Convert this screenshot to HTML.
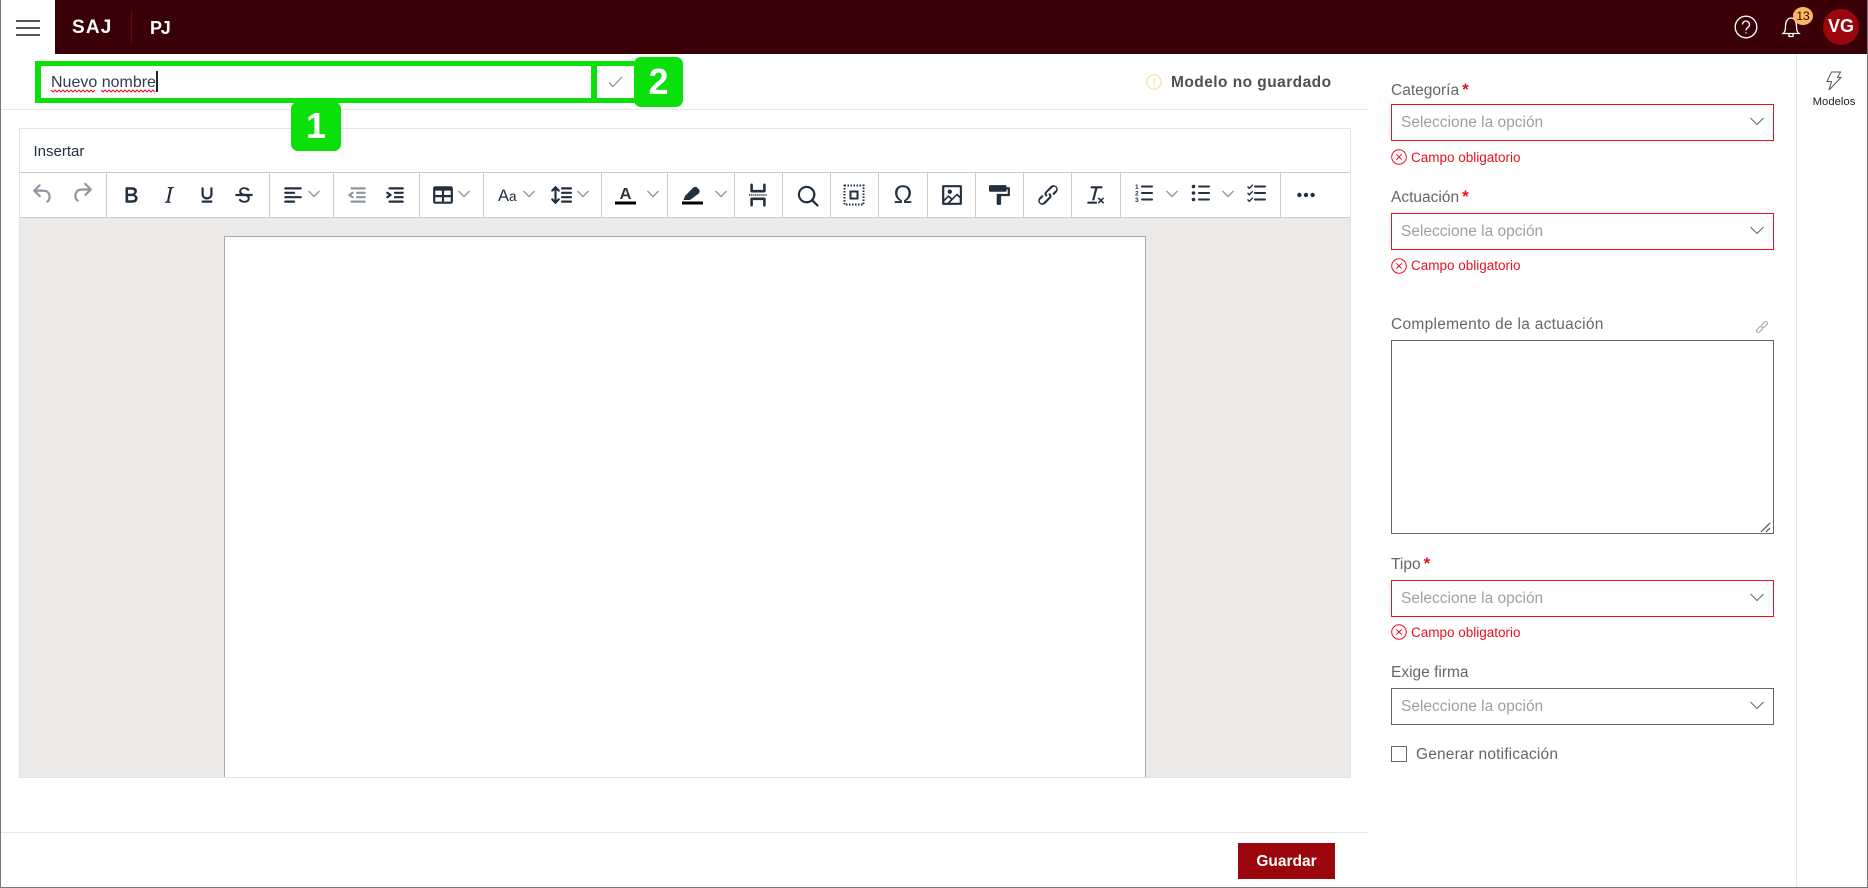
<!DOCTYPE html>
<html lang="es"><head><meta charset="utf-8"><title>SAJ PJ</title>
<style>
*{box-sizing:border-box}
html,body{margin:0;padding:0;background:#fff;width:1868px;height:888px;overflow:hidden;font-family:"Liberation Sans",sans-serif}
.a{position:absolute}
.t{position:absolute;white-space:nowrap;line-height:20px}
.sep{position:absolute;top:173px;width:1px;height:44px;background:#ccc}
.ic{position:absolute;top:182.5px;width:24px;height:24px;fill:#222f3e;transform:scale(1.1)}
.ic.ns{transform:none;top:182px}
.ch{position:absolute;top:188px;width:14px;height:12px;fill:none;stroke:#222f3e;stroke-opacity:.5;stroke-width:1.4}
.lab{position:absolute;left:1391px;font-size:15.5px;color:#666;white-space:nowrap;line-height:20px}
.lab b{color:#e81123;font-weight:bold;margin-left:3px;font-size:17px}
.sel{position:absolute;left:1391px;width:383px;height:37px;border:1px solid #e81123;background:#fff}
.sel.g{border-color:#666}
.sel span{position:absolute;left:9px;top:8px;font-size:15.5px;line-height:20px;color:#a19f9d;white-space:nowrap}
.sel svg{position:absolute;right:9px;top:12px;width:14px;height:9px;fill:none;stroke:#666;stroke-width:1}
.err{position:absolute;left:1391px;height:18px;width:200px}
.err svg{position:absolute;left:0;top:0;width:16px;height:16px;fill:none;stroke:#e81123;stroke-width:1}
.err span{position:absolute;left:20px;top:0;font-size:13.5px;line-height:18px;color:#e81123;white-space:nowrap}
.badge{position:absolute;z-index:5;background:#0be00b;border-radius:7px;color:#fff;font-weight:bold;font-size:36px;text-align:center}
</style></head><body>
<!-- header -->
<div class="a" style="left:55px;top:0;width:1813px;height:54px;background:#3a0007"></div>
<div class="a" style="left:16px;top:20px;width:24px;height:2px;background:#555"></div>
<div class="a" style="left:16px;top:27px;width:24px;height:2px;background:#555"></div>
<div class="a" style="left:16px;top:33.500px;width:24px;height:2px;background:#555"></div>
<div class="t" style="left:72px;top:18px;font-size:19px;font-weight:bold;color:#fff;letter-spacing:1.200px">SAJ</div>
<div class="a" style="left:131px;top:10px;width:1px;height:34px;background:#6a0a10"></div>
<div class="t" style="left:150px;top:18px;font-size:18px;font-weight:bold;color:#fff;letter-spacing:-1.200px">PJ</div>
<svg class="a" style="left:1734px;top:15px;width:24px;height:24px" viewBox="0 0 24 24" fill="none" stroke="#fff" stroke-width="1.300"><circle cx="12" cy="12" r="10.800"/><path d="M8.500 9.500a3.500 3.500 0 1 1 5.500 2.900c-1.200.8-2 1.400-2 3"/><circle cx="12" cy="18" r=".7" fill="#fff" stroke="none"/></svg>
<svg class="a" style="left:1780px;top:15px;width:22px;height:24px" viewBox="0 0 22 24" fill="none" stroke="#fff" stroke-width="1.300"><path d="M3 18.500c2-1.600 2.500-3.500 2.500-7.500C5.500 7 7.500 3 11 3s5.500 4 5.500 8c0 4 .5 5.900 2.500 7.500z"/><path d="M9 19v2.500h4V19"/></svg>
<div class="a" style="left:1793px;top:7px;width:20px;height:18px;border-radius:50%;background:#f9b85f;color:#3a0007;font-size:12px;line-height:18px;text-align:center">13</div>
<div class="a" style="left:1823px;top:9px;width:36px;height:36px;border-radius:50%;background:#9a060c;color:#fff;font-weight:bold;font-size:18px;line-height:35px;text-align:center">VG</div>

<!-- title row -->
<div class="a" style="left:0;top:109px;width:1369px;height:1px;background:#e6e6e6"></div>
<div class="a" style="left:35px;top:61px;width:562px;height:42px;border:6px solid #0be00b;border-top-width:5px;border-bottom-width:5px;background:#fff"></div>
<div class="a" style="left:597px;top:61px;width:38px;height:5px;background:#0be00b"></div>
<div class="a" style="left:597px;top:98px;width:38px;height:5px;background:#0be00b"></div>
<svg class="a" style="left:608px;top:76px;width:15px;height:12px" viewBox="0 0 15 12" fill="none" stroke="#666" stroke-width=".9"><path d="M1 6.500l4 4L14 1"/></svg>
<div class="t" style="left:51px;top:73px;font-size:16px;color:#323a50">Nuevo nombre</div>
<svg class="a" style="left:51px;top:88.500px;width:106px;height:4px" viewBox="0 0 106 4" fill="none" stroke="#e81123" stroke-width="1"><path d="M0 1l2 2 2-2 2 2 2-2 2 2 2-2 2 2 2-2 2 2 2-2 2 2 2-2 2 2 2-2 2 2 2-2 2 2 2-2 2 2 2-2 2 2 2-2M50 1l2 2 2-2 2 2 2-2 2 2 2-2 2 2 2-2 2 2 2-2 2 2 2-2 2 2 2-2 2 2 2-2 2 2 2-2 2 2 2-2 2 2 2-2 2 2 2-2 2 2 2-2 2 2"/></svg>
<div class="a" style="left:156px;top:71px;width:2px;height:21px;background:#222"></div>
<div class="badge" style="left:634px;top:57px;width:49px;height:50px;line-height:49px">2</div>
<div class="badge" style="left:291px;top:102px;width:50px;height:49px;line-height:47px">1</div>
<svg class="a" style="left:1146px;top:74px;width:16px;height:16px" viewBox="0 0 16 16" fill="none" stroke="#f7dfa5" stroke-width="1.200"><circle cx="8" cy="8" r="7.200"/><path d="M8 4v5.500M8 11v1.200"/></svg>
<div class="t" style="left:1171px;top:73px;font-size:15.500px;font-weight:bold;color:#4f4f55;letter-spacing:.45px">Modelo no guardado</div>

<!-- editor -->
<div class="a" style="left:19px;top:128px;width:1332px;height:650px;border:1px solid #e3e3e8;background:#ebeae8"></div>
<div class="a" style="left:20px;top:129px;width:1330px;height:88px;background:#fff"></div>
<div class="a" style="left:20px;top:172px;width:1330px;height:1px;background:#ccc"></div>
<div class="a" style="left:20px;top:217px;width:1330px;height:1px;background:#ccc"></div>
<div class="t" style="left:33.500px;top:142px;font-size:15px;color:#222f3e">Insertar</div>
<div class="a" style="left:224px;top:236px;width:922px;height:541px;background:#fff;border:1px solid #aaa;border-bottom:0"></div>

<div class="sep" style="left:106px"></div><div class="sep" style="left:269px"></div><div class="sep" style="left:333px"></div><div class="sep" style="left:419px"></div><div class="sep" style="left:483px"></div><div class="sep" style="left:601px"></div><div class="sep" style="left:667px"></div><div class="sep" style="left:734px"></div><div class="sep" style="left:782px"></div><div class="sep" style="left:830px"></div><div class="sep" style="left:878px"></div><div class="sep" style="left:927px"></div><div class="sep" style="left:975px"></div><div class="sep" style="left:1023px"></div><div class="sep" style="left:1071px"></div><div class="sep" style="left:1120px"></div><div class="sep" style="left:1280px"></div>

<svg class="ic" style="left:31px;opacity:.5" viewBox="0 0 24 24"><path d="M6.400 8H12c3.700 0 6.200 2 6.800 5.100.6 2.700-.4 5.600-2.300 6.800a1 1 0 0 1-1-1.800c1.100-.6 1.800-2.700 1.400-4.600-.5-2.100-2.100-3.500-4.900-3.500H6.400l3.300 3.300a1 1 0 1 1-1.400 1.400l-5-5a1 1 0 0 1 0-1.400l5-5a1 1 0 0 1 1.400 1.400L6.400 8Z" transform="translate(0 -1)"/></svg>
<svg class="ic" style="left:70px;opacity:.5" viewBox="0 0 24 24"><path d="M17.600 10H12c-2.800 0-4.400 1.400-4.900 3.500-.4 2 .3 4 1.400 4.600a1 1 0 1 1-1 1.800c-2-1.200-2.900-4.100-2.300-6.800.6-3 3-5.100 6.800-5.100h5.600l-3.300-3.300a1 1 0 1 1 1.400-1.400l5 5a1 1 0 0 1 0 1.400l-5 5a1 1 0 0 1-1.400-1.400l3.300-3.300Z" transform="translate(0 -2)"/></svg>
<svg class="ic" style="left:118.500px" viewBox="0 0 24 24"><path d="M7.800 19c-.3 0-.5 0-.6-.2l-.2-.5V5.700c0-.2 0-.4.2-.5l.6-.2h5c1.500 0 2.700.3 3.500 1 .7.600 1.100 1.400 1.100 2.500a3 3 0 0 1-.6 1.900c-.4.600-1 1-1.600 1.200.4.1.9.300 1.300.6s.8.700 1 1.200c.4.400.5 1 .5 1.600 0 1.300-.4 2.300-1.300 3-.8.700-2.100 1-3.800 1H7.800Zm5-8.300c.6 0 1.200-.1 1.600-.5.4-.3.6-.7.6-1.300 0-1.100-.8-1.700-2.300-1.700H9.300v3.500h3.400Zm.5 6c.7 0 1.300-.1 1.700-.4.4-.4.6-.9.6-1.500s-.2-1-.7-1.400c-.4-.3-1-.4-2-.4H9.400v3.800h4Z"/></svg>
<svg class="ic" style="left:157px" viewBox="0 0 24 24"><path d="m16.700 4.700-.1.900h-.3c-.6 0-1 0-1.400.3-.3.3-.4.6-.5 1.100l-2.100 9.800v.6c0 .5.400.8 1.400.8h.2l-.2.8H8l.2-.8h.2c1.100 0 1.800-.5 2-1.500l2-9.800.1-.5c0-.6-.4-.8-1.400-.8h-.3l.2-.9h5.800Z"/></svg>
<svg class="ic" style="left:194.500px" viewBox="0 0 24 24"><path d="M16 5c.6 0 1 .4 1 1v5.500a4 4 0 0 1-.4 1.800l-1 1.400a5.300 5.300 0 0 1-5.500 1 5 5 0 0 1-1.600-1c-.5-.4-.8-.9-1.100-1.400a4 4 0 0 1-.4-1.800V6c0-.6.4-1 1-1s1 .4 1 1v5.500c0 .3 0 .6.200 1l.6.700a3.300 3.300 0 0 0 2.200.8 3.400 3.400 0 0 0 2.200-.8c.3-.2.4-.5.6-.8l.2-.9V6c0-.6.4-1 1-1ZM8 17h8c.6 0 1 .4 1 1s-.4 1-1 1H8a1 1 0 0 1 0-2Z"/></svg>
<svg class="ic" style="left:232px" viewBox="0 0 24 24"><path d="M15.600 8.500c-.5-.7-1-1.100-1.300-1.300-.6-.4-1.300-.6-2-.6-2.700 0-2.800 1.700-2.800 2.100 0 1.600 1.800 2 3.200 2.300 4.400.9 4.600 2.800 4.600 3.900 0 1.400-.7 4.100-5 4.100A6.200 6.200 0 0 1 7 16.400l1.500-1.100c.4.600 1.600 2 3.700 2 1.600 0 2.500-.4 3-1.200.4-.8.3-2-.8-2.600-.7-.4-1.600-.7-2.900-1-1-.2-3.900-.8-3.900-3.600C7.600 6 10.300 5 12.400 5c2.900 0 4.200 1.600 4.700 2.400l-1.500 1.100Z"/><path d="M5 11h14a1 1 0 0 1 0 2H5a1 1 0 0 1 0-2Z"/></svg>
<svg class="ic" style="left:281px" viewBox="0 0 24 24"><path d="M5 5h14c.6 0 1 .4 1 1s-.4 1-1 1H5a1 1 0 1 1 0-2Zm0 4h8c.6 0 1 .4 1 1s-.4 1-1 1H5a1 1 0 1 1 0-2Zm0 8h8c.6 0 1 .4 1 1s-.4 1-1 1H5a1 1 0 0 1 0-2Zm0-4h14c.6 0 1 .4 1 1s-.4 1-1 1H5a1 1 0 0 1 0-2Z"/></svg>
<svg class="ch" style="left:307px" viewBox="0 0 14 12"><path d="M1.500 3l5.500 5.500L12.500 3"/></svg>
<svg class="ic" style="left:345px;opacity:.5" viewBox="0 0 24 24"><path d="M7 5h12c.6 0 1 .4 1 1s-.4 1-1 1H7a1 1 0 1 1 0-2Zm5 4h7c.6 0 1 .4 1 1s-.4 1-1 1h-7a1 1 0 0 1 0-2Zm0 4h7c.6 0 1 .4 1 1s-.4 1-1 1h-7a1 1 0 0 1 0-2Zm-5 4h12a1 1 0 0 1 0 2H7a1 1 0 0 1 0-2Zm1.600-3.800a1 1 0 0 1-1.200 1.600l-3-2a1 1 0 0 1 0-1.600l3-2a1 1 0 0 1 1.200 1.600L6.800 12l1.800 1.200Z"/></svg>
<svg class="ic" style="left:383px" viewBox="0 0 24 24"><path d="M7 5h12c.6 0 1 .4 1 1s-.4 1-1 1H7a1 1 0 1 1 0-2Zm5 4h7c.6 0 1 .4 1 1s-.4 1-1 1h-7a1 1 0 0 1 0-2Zm0 4h7c.6 0 1 .4 1 1s-.4 1-1 1h-7a1 1 0 0 1 0-2Zm-5 4h12a1 1 0 0 1 0 2H7a1 1 0 0 1 0-2Zm-2.600-3.800L6.200 12l-1.800-1.200a1 1 0 0 1 1.200-1.600l3 2a1 1 0 0 1 0 1.600l-3 2a1 1 0 1 1-1.200-1.600Z"/></svg>
<svg class="ic" style="left:431px" viewBox="0 0 24 24"><path d="M19 4a2 2 0 0 1 2 2v12a2 2 0 0 1-2 2H5a2 2 0 0 1-2-2V6c0-1.100.9-2 2-2h14ZM5 14v4h6v-4H5Zm14 0h-6v4h6v-4Zm0-6h-6v4h6V8ZM5 12h6V8H5v4Z"/></svg>
<svg class="ch" style="left:457px" viewBox="0 0 14 12"><path d="M1.500 3l5.500 5.500L12.500 3"/></svg>
<div class="t" style="left:498px;top:186px;color:#222f3e;font-size:16.500px">A<span style="font-size:13.500px">a</span></div>
<svg class="ch" style="left:522px" viewBox="0 0 14 12"><path d="M1.500 3l5.500 5.500L12.500 3"/></svg>
<svg class="ic" style="left:549px" viewBox="0 0 24 24"><path d="M21 5a1 1 0 0 1 .1 2H13a1 1 0 0 1-.1-2H21zm0 4a1 1 0 0 1 .1 2H13a1 1 0 0 1-.1-2H21zm0 4a1 1 0 0 1 .1 2H13a1 1 0 0 1-.1-2H21zm0 4a1 1 0 0 1 .1 2H13a1 1 0 0 1-.1-2H21zM7 3.600l3.700 3.700a1 1 0 0 1-1.300 1.500h-.1L8 7.300v9.200l1.300-1.300a1 1 0 0 1 1.300 0h.1c.4.400.4 1 0 1.300v.1L7 20.400l-3.700-3.700a1 1 0 0 1 1.300-1.500h.1L6 16.700V7.400L4.700 8.700a1 1 0 0 1-1.300 0h-.1a1 1 0 0 1 0-1.300v-.1L7 3.600z"/></svg>
<svg class="ch" style="left:576px" viewBox="0 0 14 12"><path d="M1.500 3l5.500 5.500L12.500 3"/></svg>
<svg class="ic ns" style="left:614px" viewBox="0 0 24 24"><path d="M1 19.500h21v3H1z" fill="#000"/><path d="M6 17l4-11h3l4 11h-2.200l-.9-2.700H9.100L8.200 17H6Zm3.700-4.500h3.700l-1.850-5z" fill-rule="evenodd"/></svg>
<svg class="ch" style="left:646px" viewBox="0 0 14 12"><path d="M1.500 3l5.500 5.500L12.500 3"/></svg>
<svg class="ic ns" style="left:680px" viewBox="0 0 24 24"><path d="M2 19.500h21v3H2z" fill="#000"/><path d="M3.500 18l1.500-4 8-8.200c1.300-1.200 3-1.200 4.300 0l1.500 1.500c1.200 1.200 1.200 2.900 0 4.200L10 18H3.500z"/></svg>
<svg class="ch" style="left:714px" viewBox="0 0 14 12"><path d="M1.500 3l5.500 5.500L12.500 3"/></svg>
<svg class="ic" style="left:746px;transform:scale(1.280)" viewBox="0 0 24 24"><path d="M7 3c.6 0 1 .4 1 1v4h8V4a1 1 0 0 1 2 0v5c0 .6-.4 1-1 1H7a1 1 0 0 1-1-1V4c0-.6.4-1 1-1Zm0 18a1 1 0 0 1-1-1v-5c0-.6.4-1 1-1h10c.6 0 1 .4 1 1v5a1 1 0 0 1-2 0v-4H8v4c0 .6-.4 1-1 1Z"/><path d="M5 12h14" fill="none" stroke="#222f3e" stroke-width="1.100" stroke-dasharray="1 .6"/></svg>
<svg class="ic" style="left:795px" viewBox="0 0 24 24"><path d="M16 17.300a8 8 0 1 1 1.400-1.400l4.300 4.400a1 1 0 0 1-1.400 1.400l-4.400-4.300Zm-5-.3a6 6 0 1 0 0-12 6 6 0 0 0 0 12Z" transform="translate(.6 .6)"/></svg>
<svg class="ic ns" style="left:842px;top:182.500px" viewBox="0 0 24 24"><path d="M7.500 7.500h9v9h-9zm2 2v5h5v-5z" fill-rule="evenodd"/><path d="M2.500 2.500h19v19h-19z" fill="none" stroke="#222f3e" stroke-width="2" stroke-dasharray="1.500 1.500"/></svg>
<div class="t" style="left:891px;top:185px;width:24px;text-align:center;font-size:25px;color:#222f3e">Ω</div>
<svg class="ic" style="left:940px" viewBox="0 0 24 24"><path d="m5 15.700 3.300-3.200c.3-.3.700-.3 1 0L12 15l4.100-4c.3-.4.800-.4 1 0l2 1.900V5H5v10.700ZM5 18V19h3l2.800-2.900-2-2L5 17.900Zm14-3-2.500-2.400-6.400 6.500H19v-4ZM4 3h16c.6 0 1 .4 1 1v16c0 .6-.4 1-1 1H4a1 1 0 0 1-1-1V4c0-.6.4-1 1-1Zm6 8a2 2 0 1 0 0-4 2 2 0 0 0 0 4Z" fill-rule="evenodd"/></svg>
<svg class="ic" style="left:988px" viewBox="0 0 24 24"><path d="M18 5V4c0-.5-.4-1-1-1H3a1 1 0 0 0-1 1v4c0 .6.500 1 1 1h14c.6 0 1-.4 1-1V7h1v4H9v9c0 .6.400 1 1 1h2c.6 0 1-.4 1-1v-7h8V5h-3Z"/></svg>
<svg class="ic" style="left:1036px" viewBox="0 0 24 24"><path d="M6.200 12.300a1 1 0 0 1 1.400 1.400l-2 2a2 2 0 1 0 2.600 2.800l4.800-4.800a1 1 0 0 0 0-1.400 1 1 0 1 1 1.400-1.300 2.900 2.900 0 0 1 0 4L9.600 20a3.900 3.900 0 0 1-5.500-5.500l2-2Zm11.600-.6a1 1 0 0 1-1.400-1.400l2-2a2 2 0 1 0-2.600-2.800L11 10a1 1 0 0 0 0 1.400A1 1 0 1 1 9.600 13a2.900 2.900 0 0 1 0-4L14.400 4a3.900 3.900 0 0 1 5.500 5.500l-2 2Z"/></svg>
<svg class="ic" style="left:1084px" viewBox="0 0 24 24"><path d="M13.200 6a1 1 0 0 1 0 .2l-2.600 10a1 1 0 0 1-1 .8h-.2a.8.800 0 0 1-.8-1l2.600-10H8a1 1 0 1 1 0-2h9a1 1 0 0 1 0 2h-3.800ZM5 18h7a1 1 0 0 1 0 2H5a1 1 0 0 1 0-2Zm13 1.500L16.500 18 15 19.500a.7.700 0 0 1-1-1l1.500-1.500-1.500-1.500a.7.700 0 0 1 1-1l1.500 1.500 1.500-1.500a.7.700 0 0 1 1 1L17.500 17l1.500 1.500a.7.700 0 0 1-1 1Z"/></svg>
<svg class="ic ns" style="left:1132px" viewBox="0 0 24 24"><path d="M10 3.500h10a1 1 0 0 1 0 2H10a1 1 0 0 1 0-2Zm0 6.500h10a1 1 0 0 1 0 2H10a1 1 0 0 1 0-2Zm0 6.500h10a1 1 0 0 1 0 2H10a1 1 0 0 1 0-2Z"/><text x="3" y="7" font-size="6.500" font-weight="bold" font-family="Liberation Sans">1</text><text x="3" y="13.500" font-size="6.500" font-weight="bold" font-family="Liberation Sans">2</text><text x="3" y="20" font-size="6.500" font-weight="bold" font-family="Liberation Sans">3</text></svg>
<svg class="ch" style="left:1165px" viewBox="0 0 14 12"><path d="M1.500 3l5.500 5.500L12.500 3"/></svg>
<svg class="ic ns" style="left:1189px" viewBox="0 0 24 24"><path d="M10 3.500h10a1 1 0 0 1 0 2H10a1 1 0 0 1 0-2Zm0 6.500h10a1 1 0 0 1 0 2H10a1 1 0 0 1 0-2Zm0 6.500h10a1 1 0 0 1 0 2H10a1 1 0 0 1 0-2Z"/><circle cx="4.500" cy="4.500" r="1.800"/><circle cx="4.500" cy="11" r="1.800"/><circle cx="4.500" cy="17.500" r="1.800"/></svg>
<svg class="ch" style="left:1221px" viewBox="0 0 14 12"><path d="M1.500 3l5.500 5.500L12.500 3"/></svg>
<svg class="ic ns" style="left:1244px" viewBox="0 0 24 24"><path d="M11 3.500h10a1 1 0 0 1 0 2H11a1 1 0 0 1 0-2Zm0 6.500h10a1 1 0 0 1 0 2H11a1 1 0 0 1 0-2Zm0 6.500h10a1 1 0 0 1 0 2H11a1 1 0 0 1 0-2Z"/><path d="M3.500 4.500l1.800 1.800L8.800 2.800M3.500 11l1.800 1.800L8.800 9.300M3.500 17.500l1.800 1.800 3.500-3.500" fill="none" stroke="#222f3e" stroke-width="1.400"/></svg>
<svg class="ic" style="left:1294px" viewBox="0 0 24 24"><path d="M6 10a2 2 0 0 0-2 2c0 1.100.9 2 2 2a2 2 0 0 0 2-2 2 2 0 0 0-2-2Zm12 0a2 2 0 0 0-2 2c0 1.100.9 2 2 2a2 2 0 0 0 2-2 2 2 0 0 0-2-2Zm-6 0a2 2 0 0 0-2 2c0 1.100.9 2 2 2a2 2 0 0 0 2-2 2 2 0 0 0-2-2Z"/></svg>

<!-- footer -->
<div class="a" style="left:0;top:832px;width:1369px;height:1px;background:#e6e6e6"></div>
<div class="a" style="left:1238px;top:843px;width:97px;height:36px;background:#9a060c;color:#fff;font-weight:bold;font-size:15.500px;line-height:37px;text-align:center">Guardar</div>

<!-- right panel -->
<div class="lab" style="top:79.500px">Categoría<b>*</b></div>
<div class="sel" style="top:104px"><span>Seleccione la opción</span><svg viewBox="0 0 14 9"><path d="M.5 1l6.500 6.500L13.500 1"/></svg></div>
<div class="err" style="top:149px"><svg viewBox="0 0 16 16"><circle cx="8" cy="8" r="7.300"/><path d="M5.300 5.300l5.400 5.400M10.700 5.300l-5.400 5.400"/></svg><span>Campo obligatorio</span></div>

<div class="lab" style="top:186.500px">Actuación<b>*</b></div>
<div class="sel" style="top:213px"><span>Seleccione la opción</span><svg viewBox="0 0 14 9"><path d="M.5 1l6.500 6.500L13.500 1"/></svg></div>
<div class="err" style="top:258px"><svg viewBox="0 0 16 16"><circle cx="8" cy="8" r="7.300"/><path d="M5.300 5.300l5.400 5.400M10.700 5.300l-5.400 5.400"/></svg><span style="top:-1px">Campo obligatorio</span></div>

<div class="lab" style="top:315px;letter-spacing:.28px">Complemento de la actuación</div>
<svg class="a" style="left:1755px;top:320px;width:14px;height:14px" viewBox="0 0 14 14" fill="none" stroke="#aaa" stroke-width="1.100"><rect x="1" y="7.700" width="7" height="3.600" rx="1.800" transform="rotate(-45 4.500 9.500)"/><rect x="6" y="2.700" width="7" height="3.600" rx="1.800" transform="rotate(-45 9.500 4.500)"/></svg>
<div class="a" style="left:1391px;top:340px;width:383px;height:194px;border:1px solid #666;background:#fff"></div>
<svg class="a" style="left:1760px;top:522px;width:11px;height:11px" viewBox="0 0 11 11" fill="none" stroke="#444" stroke-width="1.100"><path d="M1 10l9-9M6 10l4-4"/></svg>

<div class="lab" style="top:553.500px">Tipo<b>*</b></div>
<div class="sel" style="top:580px"><span>Seleccione la opción</span><svg viewBox="0 0 14 9"><path d="M.5 1l6.500 6.500L13.500 1"/></svg></div>
<div class="err" style="top:624px"><svg viewBox="0 0 16 16"><circle cx="8" cy="8" r="7.300"/><path d="M5.300 5.300l5.400 5.400M10.700 5.300l-5.400 5.400"/></svg><span>Campo obligatorio</span></div>

<div class="lab" style="top:663px">Exige firma</div>
<div class="sel g" style="top:688px"><span>Seleccione la opción</span><svg viewBox="0 0 14 9"><path d="M.5 1l6.500 6.500L13.500 1"/></svg></div>
<div class="a" style="left:1391px;top:746px;width:16px;height:16px;border:1px solid #666"></div>
<div class="lab" style="left:1416px;top:745px;letter-spacing:.17px">Generar notificación</div>

<!-- side rail -->
<div class="a" style="left:1796px;top:54px;width:1px;height:833px;background:#e8e8e8"></div>
<svg class="a" style="left:1825px;top:71px;width:18px;height:20px" viewBox="0 0 18 20" fill="none" stroke="#555" stroke-width="1"><path d="M6.500 1h9l-3 5.500h3.500L4 19l2.500-8.500H2z"/></svg>
<div class="t" style="left:1804px;top:91.500px;width:60px;text-align:center;font-size:11.300px;color:#222">Modelos</div>

<!-- outer frame -->
<div class="a" style="left:0;top:0;width:1px;height:888px;background:#777"></div>
<div class="a" style="left:1867px;top:0;width:1px;height:888px;background:#777"></div>
<div class="a" style="left:0;top:887px;width:1868px;height:1px;background:#777"></div>
</body></html>
